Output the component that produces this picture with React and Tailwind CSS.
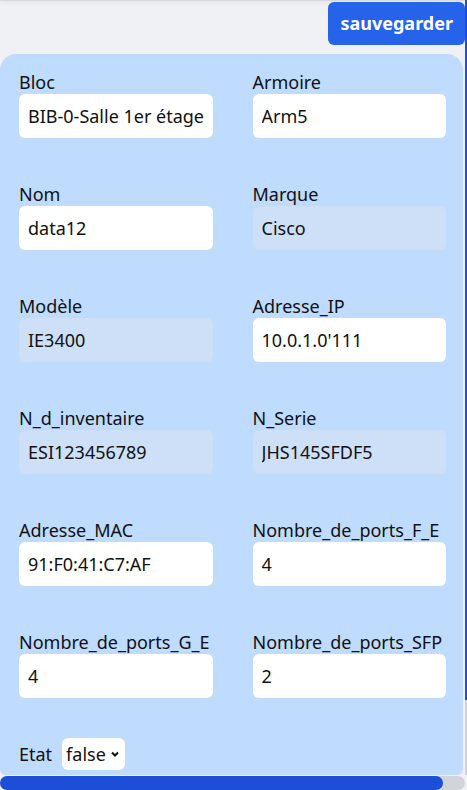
import React from 'react';

const fields = [
  { label: 'Bloc', value: 'BIB-0-Salle 1er étage', editable: true },
  { label: 'Armoire', value: 'Arm5', editable: true },
  { label: 'Nom', value: 'data12', editable: true },
  { label: 'Marque', value: 'Cisco', editable: false },
  { label: 'Modèle', value: 'IE3400', editable: false },
  { label: 'Adresse_IP', value: "10.0.1.0'111", editable: true },
  { label: 'N_d_inventaire', value: 'ESI123456789', editable: false },
  { label: 'N_Serie', value: 'JHS145SFDF5', editable: false },
  { label: 'Adresse_MAC', value: '91:F0:41:C7:AF', editable: true },
  { label: 'Nombre_de_ports_F_E', value: '4', editable: true },
  { label: 'Nombre_de_ports_G_E', value: '4', editable: true },
  { label: 'Nombre_de_ports_SFP', value: '2', editable: true },
];

const Field = ({ label, value, editable }) => (
  <div className="flex flex-col mb-[44px] min-w-0">
    <label className="text-[18px] leading-[24px] text-[#111] whitespace-nowrap">{label}</label>
    <input
      readOnly
      defaultValue={value}
      className={`h-[44px] w-full rounded-md pl-[9px] pr-[4px] text-[18px] text-[#111] outline-none ${
        editable ? 'bg-white' : 'bg-[#cde0f8]'
      }`}
      style={{ fontFamily: 'inherit' }}
    />
  </div>
);

export default function App() {
  return (
    <div
      className="w-[467px] h-[790px] overflow-hidden flex flex-col bg-[#eff1f4]"
      style={{ fontFamily: '"Noto Sans", "Open Sans", sans-serif' }}
    >
      <div className="flex flex-1 min-h-0">
        {/* Main content */}
        <div className="flex-1 flex flex-col min-w-0">
          {/* header shadow */}
          <div className="h-[1px] bg-[#d9dadd] shadow-[0_1px_4px_rgba(0,0,0,0.18)]" />
          <div className="flex justify-end pt-[1px]">
            <button className="h-[43px] px-[12px] rounded-md bg-[#2563eb] text-white font-bold text-[18px]">
              sauvegarder
            </button>
          </div>

          <div className="mt-[9px] mr-[2px] flex-1 rounded-t-2xl rounded-b-md bg-[#bfdbfe] pl-[19px] pr-[17px] pt-[16px]">
            <div className="grid grid-cols-2 gap-x-[40px]">
              {fields.map((f) => (
                <Field key={f.label} {...f} />
              ))}
            </div>
            <div className="flex items-center gap-[10px] -mt-[4px]">
              <span className="text-[18px] text-[#111]">Etat</span>
              <div className="h-[32px] rounded-md bg-white flex items-center pl-[4px] pr-[5px] gap-[4px]">
                <span className="text-[18px] text-[#111]">false</span>
                <svg className="w-[10px] h-[10px]" viewBox="0 0 10 10" fill="none" stroke="#111" strokeWidth="2">
                  <path d="M2 3.5l3 3 3-3" />
                </svg>
              </div>
            </div>
          </div>
        </div>

        {/* vertical scrollbar */}
        <div className="w-[2px] flex flex-col">
          <div className="h-[700px] bg-[#1d4ed8]" />
          <div className="flex-1 bg-[#d1d5db]" />
        </div>
      </div>

      {/* horizontal scrollbar */}
      <div className="h-[14px] flex bg-[#d1d5db] rounded-full mr-[2px] mt-[1px]">
        <div className="w-[443px] h-full rounded-full bg-[#1d4ed8]" />
      </div>
    </div>
  );
}
